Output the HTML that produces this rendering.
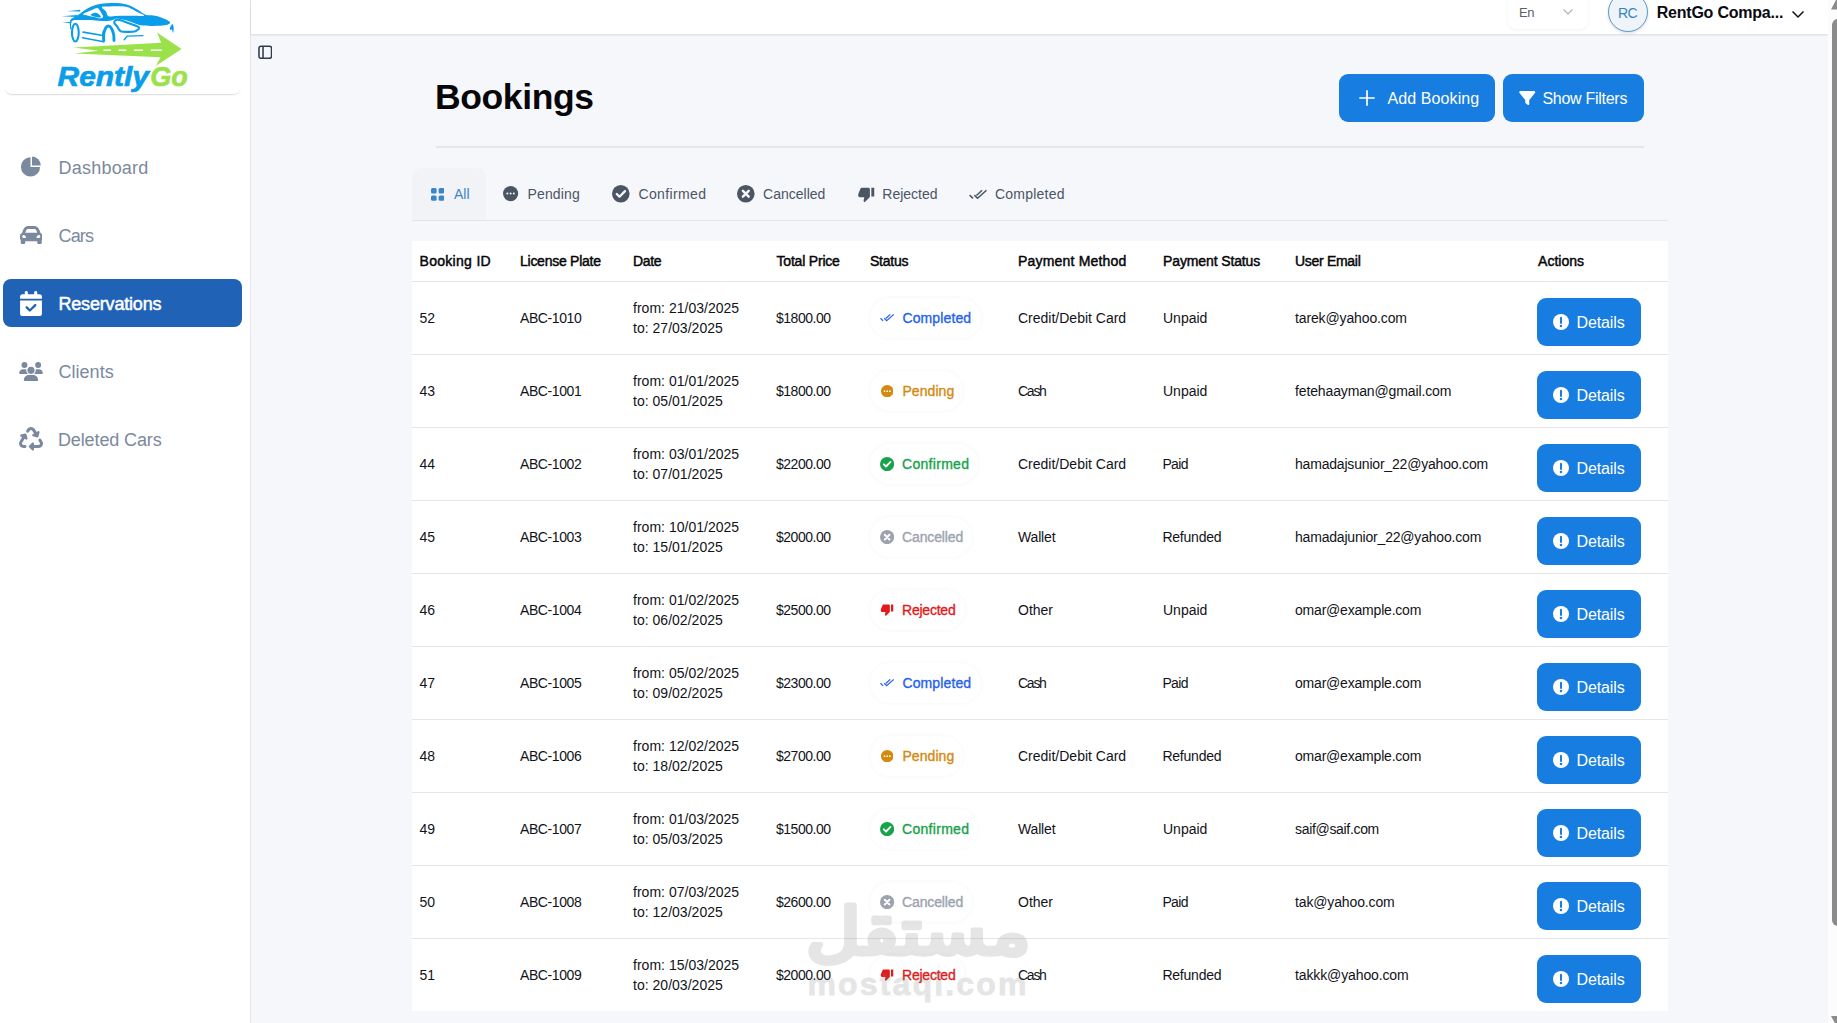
<!DOCTYPE html>
<html lang="en">
<head>
<meta charset="utf-8">
<title>Bookings - RentlyGo</title>
<style>
*{box-sizing:border-box;margin:0;padding:0}
html,body{width:1837px;height:1023px;overflow:hidden}
body{position:relative;background:#f5f7fb;font-family:"Liberation Sans",sans-serif;color:#0b0b0f;font-size:14px}
.abs{position:absolute}
/* sidebar */
.sidebar{position:absolute;left:0;top:0;width:251px;height:1023px;background:#fff;border-right:1px solid #e6e6e9}
.logo-box{position:absolute;left:4px;top:-6px;width:237px;height:100px;border-radius:8px;background:#fff;box-shadow:0 2px 1.5px -1px rgba(0,0,0,.15)}
.logo{position:absolute;left:50px;top:0;width:150px;height:96px}
.nav{position:absolute;left:3px;width:239px;height:48px;border-radius:8px;color:#7b899e;font-size:18px}
.nav svg{position:absolute;fill:#7b899e}
.nav .nt{position:absolute;left:56px;top:15px;line-height:20px;white-space:nowrap}
.nav.active{background:#2062b5;color:#fff;-webkit-text-stroke:0.5px #fff}
.nav.active svg{fill:#fff}
/* topbar */
.topbar{position:absolute;left:251px;top:0;width:1577px;height:34px;background:#fff;box-shadow:0 1px 2px rgba(0,0,0,.12)}
.lang{position:absolute;left:1508px;top:-10px;width:80px;height:39px;border-radius:8px;background:#fff;box-shadow:0 1px 3px rgba(0,0,0,.06)}
.avatar{position:absolute;left:1608px;top:-8px;width:40px;height:40px;border-radius:50%;background:#eef4fa;border:1px solid #5a9bcb;box-shadow:0 1px 3px rgba(0,0,0,.15)}
/* scrollbar */
.sb{position:absolute;left:1828px;top:0;width:9px;height:1023px;background:#fcfcfc}
.sb i{position:absolute;left:4px;top:19px;width:12px;height:907px;border-radius:6px;background:#8b8b8b}
/* header */
h1{position:absolute;left:435px;top:75px;font-size:35.5px;line-height:44px;font-weight:bold;color:#07070a;white-space:nowrap;letter-spacing:0}
.btn{position:absolute;height:48px;border-radius:9px;background:#177de0;color:#fff;font-size:16px;white-space:nowrap}
.btn .bt{position:absolute;top:15px;line-height:20px}
.btn svg{position:absolute}
.hr{position:absolute;left:436px;top:146px;width:1208px;height:2px;background:#e4e6e9}
/* tabs */
.tabline{position:absolute;left:412px;top:220px;width:1256px;height:1px;background:#e3e5ea}
.tab-all{position:absolute;left:412px;top:168px;width:74px;height:52px;border-radius:9px 9px 0 0;background:#f2f3f7}
.tab{position:absolute;top:184px;line-height:20px;font-size:14px;color:#4b5563;white-space:nowrap}
.ticon{position:absolute}
/* table */
.table{position:absolute;left:412px;top:241px;width:1256px;height:770px;background:#fff}
.row{position:absolute;left:0;width:1256px;height:73px;border-top:1px solid #e4e6ea}
.th{position:absolute;top:10px;line-height:20px;font-size:14px;white-space:nowrap;color:#050508;-webkit-text-stroke:0.45px #050508}
.c{position:absolute;top:26px;line-height:20px;white-space:nowrap;color:#111318}
.c.d{top:16px}
.badge{position:absolute;left:458px;top:16px;height:40px;border-radius:20px;background:#fff;box-shadow:0 0 4px rgba(0,0,0,.042);font-size:14px;white-space:nowrap;-webkit-text-stroke:0.35px}
.badge .bx{position:absolute;left:32px;top:10px;line-height:20px}
.badge svg{position:absolute}
.det{position:absolute;left:1125px;top:16px;width:104px;height:48px;border-radius:9px;background:#177de0;color:#fff;font-size:16px}
.det .dx{position:absolute;left:40px;top:15px;line-height:20px}
.det svg{position:absolute;left:16px;top:16px;width:16px;height:16px}
.wm{position:absolute;color:#808080;opacity:.2;white-space:nowrap}
</style>
</head>
<body>
<div class="sidebar">
<div class="logo-box"></div>
<svg class="logo" viewBox="0 0 1598 1023">
<path fill="#0a9de9" fill-rule="evenodd" d="M216 235C214 232 217 212 224 203C232 194 248 188 263 180C278 171 298 161 315 150C332 138 341 125 364 111C386 97 417 78 447 66C477 54 510 46 544 40C579 35 619 32 656 31C693 31 735 32 767 36C800 41 823 48 851 59C878 71 906 88 934 104C962 121 990 146 1018 157C1045 167 1072 160 1101 166C1130 171 1162 178 1192 189C1221 201 1265 221 1276 233C1288 245 1274 252 1261 259C1248 265 1230 270 1198 273C1167 276 1112 277 1073 276C1035 276 999 275 969 270C939 265 919 252 892 244C866 235 838 225 809 217C779 210 737 199 715 198C693 197 693 206 677 210C660 214 641 222 614 224C587 226 553 223 517 221C481 219 440 214 398 213C357 212 293 211 266 213C239 215 243 220 235 224C226 228 218 239 216 235ZM350 153C348 146 377 135 395 127C412 118 436 110 454 103C472 96 491 86 503 86C515 87 517 95 525 104C533 114 543 130 550 143C557 155 569 171 565 180C562 188 546 196 531 196C515 197 496 187 475 182C454 177 426 172 405 167C384 162 351 160 350 153ZM553 74C560 65 599 69 642 68C685 68 771 66 809 71C847 75 849 85 871 95C893 106 920 122 941 134C962 146 1015 161 1000 167C985 173 899 168 851 169C802 170 749 170 711 170C673 171 641 180 622 172C603 164 608 138 597 122C585 105 545 83 553 74Z"/>
<path fill="#0a9de9" d="M433 159C432 154 445 146 454 143C463 139 475 135 485 136C495 136 504 140 513 146C522 152 538 167 541 174C544 181 539 186 531 188C522 189 504 185 492 182C481 180 471 177 461 173C451 169 434 164 433 159Z"/>
<g fill="none" stroke="#0a9de9" stroke-linecap="round" stroke-linejoin="round">
<path d="M715 209C731 206 756 218 781 226C806 234 837 246 864 257C892 268 940 280 948 292C956 305 928 325 910 333C891 340 863 340 837 340C811 340 773 342 753 333C733 323 726 297 715 282C703 266 684 252 684 240C684 228 699 211 715 209Z" stroke-width="23"/>
<ellipse cx="270" cy="348" rx="36" ry="94" stroke-width="22"/>
<path d="M572 435C572 423 569 384 572 362C576 339 585 313 593 299C601 285 611 277 621 277C631 277 643 285 652 299C662 313 672 340 677 362C682 384 681 420 682 431" stroke-width="31"/>
<path d="M224 216C223 223 218 242 217 257C217 273 220 298 221 306" stroke-width="13"/>
<path d="M353 342 L565 379M346 402 L572 445 L565 341" stroke-width="17"/>
<path d="M791 424 L824 384 L990 380" stroke-width="14"/>
</g>
<path fill="#0a9de9" d="M183 120 L322 104 L322 122Z"/>
<path fill="#0a9de9" d="M123 174 L287 159 L287 180Z"/>
<path fill="#0a9de9" d="M134 240 L228 233 L228 249Z"/>
<path fill="#0a9de9" d="M1276 306C1277 296 1297 257 1304 256C1311 255 1317 283 1318 299C1319 315 1314 348 1311 351C1308 354 1305 324 1299 317C1294 309 1276 316 1276 306Z"/>
<path d="M250 505L1185 455L1140 345L1402 522L1130 700L1178 610L258 570L520 540Z" fill="#9be24a"/>
<path d="M570 535H650M730 535H812M895 535H990M1075 535H1190" stroke="#fff" stroke-width="17" fill="none"/>
<text x="80" y="915" font-family="Liberation Sans, sans-serif" font-weight="bold" font-style="italic" font-size="290" fill="#0a9de9" stroke="#0a9de9" stroke-width="7" textLength="975" lengthAdjust="spacingAndGlyphs">Rently</text>
<text x="1068" y="915" font-family="Liberation Sans, sans-serif" font-weight="bold" font-style="italic" font-size="290" fill="#9be24a" stroke="#9be24a" stroke-width="7" textLength="400" lengthAdjust="spacingAndGlyphs">Go</text>
</svg>
<div class="nav" style="top:143px"><svg style="left:17px;top:13px;width:22px;height:22px" viewBox="0 0 22 22"><path d="M10.500 10.900L10.500 1.300A9.600 9.600 0 1 0 20.100 10.900Z"/><path d="M12 9.400L12 0.600A8.800 8.800 0 0 1 20.800 9.400Z"/></svg><div class="nt"><span style="letter-spacing:0.21px;margin-left:-0.45px">Dashboard</span></div></div>
<div class="nav" style="top:211px"><svg style="left:16.8px;top:14.9px;width:22.5px;height:18.2px" viewBox="0 64 480 384" preserveAspectRatio="none"><path d="M438.660 212.330l-11.240-28.100-19.930-49.830C390.380 91.630 349.570 64 303.500 64h-127c-46.060 0-86.880 27.630-103.990 70.400l-19.930 49.830-11.240 28.100C17.220 221.500 0 244.660 0 272v48c0 16.120 6.160 30.670 16 41.930V416c0 17.670 14.330 32 32 32h32c17.670 0 32-14.330 32-32v-32h256v32c0 17.670 14.330 32 32 32h32c17.670 0 32-14.330 32-32v-54.070c9.840-11.250 16-25.800 16-41.930v-48c0-27.340-17.220-50.500-41.340-59.670zm-306.730-54.160c7.290-18.220 24.940-30.170 44.570-30.170h127c19.630 0 37.280 11.950 44.570 30.170L368 208H112l19.930-49.830zM80 319.800c-19.200 0-32-12.760-32-31.900S60.800 256 80 256s48 28.710 48 47.850-28.800 15.950-48 15.950zm320 0c-19.200 0-48 3.190-48-15.950S380.800 256 400 256s32 12.760 32 31.900-12.800 31.900-32 31.900z"/></svg><div class="nt"><span style="letter-spacing:-0.87px;margin-left:-0.45px">Cars</span></div></div>
<div class="nav active" style="top:279px"><svg style="left:17px;top:11.5px;width:22px;height:25px" viewBox="0 0 448 512"><path d="M128 0c17.700 0 32 14.300 32 32V64H288V32c0-17.700 14.300-32 32-32s32 14.300 32 32V64h48c26.500 0 48 21.500 48 48v48H0V112C0 85.500 21.500 64 48 64H96V32c0-17.700 14.300-32 32-32zM0 192H448V464c0 26.500-21.500 48-48 48H48c-26.500 0-48-21.500-48-48V192zM329 305c9.400-9.400 9.400-24.600 0-33.900s-24.600-9.400-33.900 0l-95 95-47-47c-9.400-9.400-24.600-9.400-33.900 0s-9.400 24.600 0 33.900l64 64c9.400 9.400 24.600 9.400 33.900 0L329 305z"/></svg><div class="nt"><span style="letter-spacing:-0.18px;margin-left:-0.54px">Reservations</span></div></div>
<div class="nav" style="top:347px"><svg style="left:16px;top:14.5px;width:24px;height:19px" viewBox="0 0 640 512"><path d="M144 0a80 80 0 1 1 0 160A80 80 0 1 1 144 0zM512 0a80 80 0 1 1 0 160A80 80 0 1 1 512 0zM0 298.700C0 239.800 47.800 192 106.700 192h42.700c15.900 0 31 3.500 44.600 9.700c-1.300 7.200-1.900 14.700-1.900 22.300c0 38.200 16.800 72.500 43.300 96c-.2 0-.4 0-.7 0H21.300C9.600 320 0 310.400 0 298.700zM405.300 320c-.2 0-.4 0-.7 0c26.600-23.500 43.300-57.800 43.300-96c0-7.600-.7-15-1.900-22.300c13.600-6.300 28.700-9.700 44.600-9.700h42.700C592.200 192 640 239.800 640 298.700c0 11.800-9.600 21.300-21.300 21.300H405.300zM224 224a96 96 0 1 1 192 0 96 96 0 1 1 -192 0zM128 485.300C128 411.700 187.700 352 261.300 352H378.700C452.300 352 512 411.700 512 485.300c0 14.700-11.900 26.700-26.700 26.700H154.700c-14.700 0-26.700-11.900-26.700-26.700z"/></svg><div class="nt"><span style="letter-spacing:0.03px;margin-left:-0.54px">Clients</span></div></div>
<div class="nav" style="top:415px"><svg style="left:16px;top:12px;width:24px;height:24px" viewBox="0 0 512 512"><path d="M174.700 45.100C192.200 17 223 0 256 0s63.800 17 81.300 45.100l38.600 61.700 27-15.600c8.400-4.900 18.900-4.200 26.600 1.700s11.100 15.900 8.600 25.300l-23.400 87.400c-3.400 12.800-16.600 20.400-29.400 17l-87.400-23.400c-9.400-2.500-16.300-10.400-17.600-20s3.400-19.100 11.800-23.900l28.400-16.400L283 79c-5.800-9.300-16-15-27-15s-21.200 5.700-27 15l-17.500 28c-9.200 14.800-28.600 19.500-43.600 10.500c-15.300-9.200-20.200-29.200-10.700-44.400l17.500-28zM429.500 251.900c15-9 34.400-4.300 43.600 10.500l24.400 39.100c9.400 15.100 14.400 32.400 14.600 50.200c.3 53.100-42.700 96.400-95.800 96.400L320 448v32c0 9.700-5.800 18.500-14.800 22.200s-19.300 1.700-26.200-5.200l-64-64c-9.400-9.400-9.400-24.600 0-33.900l64-64c6.900-6.900 17.200-8.900 26.200-5.200s14.800 12.500 14.800 22.200v32l96.200 0c17.600 0 31.900-14.400 31.800-32c0-5.900-1.700-11.700-4.800-16.700l-24.400-39.100c-9.500-15.200-4.700-35.200 10.700-44.400zm-364.600-31L36 204.200c-8.400-4.900-13.100-14.300-11.800-23.900s8.200-17.500 17.600-20l87.400-23.400c12.800-3.400 26 4.200 29.400 17L182 241.200c2.500 9.400-.9 19.300-8.600 25.300s-18.200 6.600-26.600 1.700l-26.500-15.300L68.800 335.300c-3.100 5-4.800 10.800-4.800 16.700c-.1 17.600 14.200 32 31.800 32l32.200 0c17.700 0 32 14.300 32 32s-14.300 32-32 32l-32.200 0C42.700 448-.3 404.800 0 351.600c.1-17.800 5.100-35.100 14.600-50.200l50.300-80.500z"/></svg><div class="nt"><span style="letter-spacing:-0.11px;margin-left:-1.08px">Deleted Cars</span></div></div>
</div>
<div class="topbar"></div>
<div class="lang"></div>
<div class="abs" style="left:1519px;top:2.500px;line-height:20px;font-size:13px;color:#596171"><span style="letter-spacing:-0.54px">En</span></div>
<svg class="abs" style="left:1562px;top:8px;width:12px;height:8px" viewBox="0 0 12 8" fill="none" stroke="#aab0b8" stroke-width="1.200"><path d="M1.500 1.500L6 6L10.500 1.500"/></svg>
<div class="avatar"></div>
<div class="abs" style="left:1618px;top:2.500px;line-height:20px;font-size:14px;color:#3286c3"><span style="letter-spacing:-0.54px">RC</span></div>
<div class="abs" style="left:1656px;top:3px;line-height:20px;font-size:16px;font-weight:bold;color:#0a0a12;white-space:nowrap"><span style="letter-spacing:-0.22px;margin-left:0.72px">RentGo Compa...</span></div>
<svg class="abs" style="left:1791px;top:10px;width:14px;height:9px" viewBox="0 0 14 9" fill="none" stroke="#111" stroke-width="1.500"><path d="M1.500 1.500L7 7L12.500 1.500"/></svg>
<div class="sb"><i></i>
<svg class="abs" style="left:3px;top:0;width:12px;height:10px" viewBox="0 0 12 10"><path d="M6 -2L12 9.500H0Z" fill="#8b8b8b"/></svg>
<svg class="abs" style="left:3px;top:1015px;width:12px;height:8px" viewBox="0 0 12 8"><path d="M0 1H12L6 12Z" fill="#8b8b8b"/></svg>
</div>
<svg class="abs" style="left:257.500px;top:44.500px;width:14.500px;height:14.500px" viewBox="0 0 15 15" fill="none" stroke="#333c4c" stroke-width="1.600"><rect x="1" y="1.200" width="13" height="12.600" rx="2.200"/><path d="M5.200 1.200V13.800"/></svg>
<h1><span style="letter-spacing:-0.39px">Bookings</span></h1>
<div class="btn" style="left:1339px;top:74px;width:156px">
<svg style="left:20px;top:16px;width:16px;height:16px" viewBox="0 0 16 16" stroke="#fff" stroke-width="1.700" fill="none"><path d="M8 0.300V15.700M0.300 8H15.700"/></svg>
<div class="bt" style="left:48px"><span style="letter-spacing:0.10px;margin-left:0.54px">Add Booking</span></div></div>
<div class="btn" style="left:1503px;top:74px;width:141px">
<svg style="left:16px;top:16px;width:16.5px;height:16px" viewBox="0 0 512 512" fill="#fff"><path d="M3.900 54.900C10.500 40.900 24.500 32 40 32H472c15.500 0 29.500 8.900 36.100 22.900s4.600 30.500-5.200 42.500L320 320.900V448c0 12.100-6.800 23.200-17.700 28.600s-23.800 4.300-33.500-3l-64-48c-8.100-6-12.800-15.500-12.800-25.600V320.900L9 97.300C-.7 85.400-2.800 68.800 3.900 54.900z"/></svg>
<div class="bt" style="left:40px"><span style="letter-spacing:-0.28px;margin-left:-0.54px">Show Filters</span></div></div>
<div class="hr"></div>
<div class="tab-all"></div><div class="tabline"></div>
<svg class="ticon" style="left:430.500px;top:187.800px;width:13.500px;height:13px" viewBox="0 0 13.500 13" fill="#3b86c6"><rect x="0" y="0" width="5.600" height="5.400" rx="1.500"/><rect x="7.600" y="0" width="5.600" height="5.400" rx="1.500"/><rect x="0" y="7.400" width="5.600" height="5.400" rx="1.500"/><rect x="7.600" y="7.400" width="5.600" height="5.400" rx="1.500"/></svg>
<div class="tab" style="left:454px;color:#3b86c6"><span>All</span></div>
<svg class="ticon" style="position:absolute;left:503.4px;top:186.4px;width:15.2px;height:15.2px" viewBox="-10 -10 20 20"><circle r="10" fill="#4b5563"/><circle cx="-4.3" cy="0" r="1.35" fill="#f5f7fb"/><circle cx="0" cy="0" r="1.35" fill="#f5f7fb"/><circle cx="4.3" cy="0" r="1.35" fill="#f5f7fb"/></svg>
<div class="tab" style="left:528px"><span style="letter-spacing:0.15px;margin-left:-0.54px">Pending</span></div>
<svg class="ticon" style="position:absolute;left:612.2px;top:185.2px;width:17.6px;height:17.6px" viewBox="-10 -10 20 20"><circle r="10" fill="#4b5563"/><path d="M-4.600 0.300L-1.500 3.400L4.800 -3" fill="none" stroke="#f5f7fb" stroke-width="2.600" stroke-linecap="round" stroke-linejoin="round"/></svg>
<div class="tab" style="left:638.500px"><span style="letter-spacing:0.36px">Confirmed</span></div>
<svg class="ticon" style="position:absolute;left:737.2px;top:185.2px;width:17.6px;height:17.6px" viewBox="-10 -10 20 20"><circle r="10" fill="#4b5563"/><path d="M-3.300 -3.300L3.300 3.300M3.300 -3.300L-3.300 3.300" fill="none" stroke="#f5f7fb" stroke-width="2.800" stroke-linecap="round"/></svg>
<div class="tab" style="left:763.500px"><span style="margin-left:-0.45px">Cancelled</span></div>
<svg style="position:absolute;left:856.5px;top:186.5px;width:18.5px;height:16px" viewBox="0 2 24 22" fill="#4b5563"><path d="M15 3H6c-.83 0-1.54.5-1.84 1.22l-3.020 7.050c-.09.23-.14.47-.14.73v2c0 1.100.9 2 2 2h6.310l-.95 4.570-.03.32c0 .41.17.79.44 1.060L9.830 23l6.590-6.590c.36-.36.58-.86.58-1.410V5c0-1.100-.9-2-2-2zm4 0v12h4V3h-4z"/></svg>
<div class="tab" style="left:883px"><span style="margin-left:-0.72px">Rejected</span></div>
<svg class="ticon" style="position:absolute;left:968.5px;top:188.5px;width:18.5px;height:11px" viewBox="0 0 18 10" fill="none" stroke="#4b5563" stroke-width="1.45" stroke-linecap="butt" stroke-linejoin="miter"><path d="M5.200 5.600L8.300 8.700L17 0.800"/><path d="M0.600 5.600L3.900 8.800M7.200 5.900L12.700 0.800"/></svg>
<div class="tab" style="left:995px"><span style="letter-spacing:0.23px">Completed</span></div>
<div class="table">
<div class="th" style="left:7.5px"><span style="letter-spacing:0.30px">Booking ID</span></div>
<div class="th" style="left:108px"><span style="letter-spacing:-0.26px">License Plate</span></div>
<div class="th" style="left:221px"><span style="letter-spacing:-0.36px">Date</span></div>
<div class="th" style="left:364px"><span style="letter-spacing:-0.20px;margin-left:0.54px">Total Price</span></div>
<div class="th" style="left:458px"><span style="letter-spacing:-0.22px">Status</span></div>
<div class="th" style="left:606px"><span style="letter-spacing:0.19px">Payment Method</span></div>
<div class="th" style="left:751px"><span style="letter-spacing:-0.12px">Payment Status</span></div>
<div class="th" style="left:883px"><span style="letter-spacing:-0.30px">User Email</span></div>
<div class="th" style="left:1125px"><span style="margin-left:1.08px">Actions</span></div>
<div class="row" style="top:40px">
<div class="c" style="left:7.5px"><span>52</span></div><div class="c" style="left:108px"><span style="letter-spacing:-0.41px">ABC-1010</span></div>
<div class="c d" style="left:221px"><span style="letter-spacing:0.02px">from: 21/03/2025</span><br><span style="letter-spacing:0.02px">to: 27/03/2025</span></div>
<div class="c" style="left:364px"><span style="letter-spacing:-0.49px">$1800.00</span></div>
<div class="badge" style="width:111px;color:#2563eb"><svg class="" style="position:absolute;left:9.5px;top:15px;width:14.5px;height:9.5px" viewBox="0 0 18 10" fill="none" stroke="#2563eb" stroke-width="1.5" stroke-linecap="butt" stroke-linejoin="miter"><path d="M5.200 5.600L8.300 8.700L17 0.800"/><path d="M0.600 5.600L3.900 8.800M7.200 5.900L12.700 0.800"/></svg><div class="bx"><span style="letter-spacing:0.12px;margin-left:0.45px">Completed</span></div></div>
<div class="c" style="left:606px"><span>Credit/Debit Card</span></div><div class="c" style="left:751px"><span>Unpaid</span></div><div class="c" style="left:883px"><span style="letter-spacing:-0.13px">tarek@yahoo.com</span></div>
<div class="det"><svg class="" style="position:absolute;left:16px;top:16px;width:16px;height:16px" viewBox="-10 -10 20 20"><circle r="10" fill="#fff"/><path d="M0 -5.200V1.200" fill="none" stroke="#177de0" stroke-width="2.500" stroke-linecap="round"/><circle cx="0" cy="4.900" r="1.600" fill="#177de0"/></svg><div class="dx"><span style="letter-spacing:-0.14px;margin-left:-0.45px">Details</span></div></div>
</div>
<div class="row" style="top:113px">
<div class="c" style="left:7.5px"><span>43</span></div><div class="c" style="left:108px"><span style="letter-spacing:-0.41px">ABC-1001</span></div>
<div class="c d" style="left:221px"><span style="letter-spacing:0.02px">from: 01/01/2025</span><br><span style="letter-spacing:0.02px">to: 05/01/2025</span></div>
<div class="c" style="left:364px"><span style="letter-spacing:-0.49px">$1800.00</span></div>
<div class="badge" style="width:93px;color:#d4890f"><svg class="" style="position:absolute;left:10.8px;top:13.8px;width:12.4px;height:12.4px" viewBox="-10 -10 20 20"><circle r="10" fill="#d4890f"/><circle cx="-4.3" cy="0" r="1.35" fill="#fff"/><circle cx="0" cy="0" r="1.35" fill="#fff"/><circle cx="4.3" cy="0" r="1.35" fill="#fff"/></svg><div class="bx"><span style="letter-spacing:0.07px;margin-left:0.45px">Pending</span></div></div>
<div class="c" style="left:606px"><span style="letter-spacing:-1.26px">Cash</span></div><div class="c" style="left:751px"><span>Unpaid</span></div><div class="c" style="left:883px"><span style="letter-spacing:-0.13px">fetehaayman@gmail.com</span></div>
<div class="det"><svg class="" style="position:absolute;left:16px;top:16px;width:16px;height:16px" viewBox="-10 -10 20 20"><circle r="10" fill="#fff"/><path d="M0 -5.200V1.200" fill="none" stroke="#177de0" stroke-width="2.500" stroke-linecap="round"/><circle cx="0" cy="4.900" r="1.600" fill="#177de0"/></svg><div class="dx"><span style="letter-spacing:-0.14px;margin-left:-0.45px">Details</span></div></div>
</div>
<div class="row" style="top:186px">
<div class="c" style="left:7.5px"><span>44</span></div><div class="c" style="left:108px"><span style="letter-spacing:-0.41px">ABC-1002</span></div>
<div class="c d" style="left:221px"><span style="letter-spacing:0.02px">from: 03/01/2025</span><br><span style="letter-spacing:0.02px">to: 07/01/2025</span></div>
<div class="c" style="left:364px"><span style="letter-spacing:-0.49px">$2200.00</span></div>
<div class="badge" style="width:108px;color:#16a34a"><svg class="" style="position:absolute;left:9.9px;top:12.9px;width:14.2px;height:14.2px" viewBox="-10 -10 20 20"><circle r="10" fill="#16a34a"/><path d="M-4.600 0.300L-1.500 3.400L4.800 -3" fill="none" stroke="#fff" stroke-width="2.600" stroke-linecap="round" stroke-linejoin="round"/></svg><div class="bx"><span style="letter-spacing:0.30px">Confirmed</span></div></div>
<div class="c" style="left:606px"><span>Credit/Debit Card</span></div><div class="c" style="left:751px"><span style="letter-spacing:-0.66px;margin-left:-0.63px">Paid</span></div><div class="c" style="left:883px"><span style="letter-spacing:-0.19px">hamadajsunior_22@yahoo.com</span></div>
<div class="det"><svg class="" style="position:absolute;left:16px;top:16px;width:16px;height:16px" viewBox="-10 -10 20 20"><circle r="10" fill="#fff"/><path d="M0 -5.200V1.200" fill="none" stroke="#177de0" stroke-width="2.500" stroke-linecap="round"/><circle cx="0" cy="4.900" r="1.600" fill="#177de0"/></svg><div class="dx"><span style="letter-spacing:-0.14px;margin-left:-0.45px">Details</span></div></div>
</div>
<div class="row" style="top:259px">
<div class="c" style="left:7.5px"><span>45</span></div><div class="c" style="left:108px"><span style="letter-spacing:-0.41px">ABC-1003</span></div>
<div class="c d" style="left:221px"><span style="letter-spacing:0.02px">from: 10/01/2025</span><br><span style="letter-spacing:0.02px">to: 15/01/2025</span></div>
<div class="c" style="left:364px"><span style="letter-spacing:-0.49px">$2000.00</span></div>
<div class="badge" style="width:102px;color:#9ca3af"><svg class="" style="position:absolute;left:9.9px;top:12.9px;width:14.2px;height:14.2px" viewBox="-10 -10 20 20"><circle r="10" fill="#9ca3af"/><path d="M-3.300 -3.300L3.300 3.300M3.300 -3.300L-3.300 3.300" fill="none" stroke="#fff" stroke-width="2.800" stroke-linecap="round"/></svg><div class="bx"><span style="letter-spacing:-0.12px">Cancelled</span></div></div>
<div class="c" style="left:606px"><span style="letter-spacing:-0.16px">Wallet</span></div><div class="c" style="left:751px"><span style="letter-spacing:-0.22px;margin-left:-0.63px">Refunded</span></div><div class="c" style="left:883px"><span style="letter-spacing:-0.19px">hamadajunior_22@yahoo.com</span></div>
<div class="det"><svg class="" style="position:absolute;left:16px;top:16px;width:16px;height:16px" viewBox="-10 -10 20 20"><circle r="10" fill="#fff"/><path d="M0 -5.200V1.200" fill="none" stroke="#177de0" stroke-width="2.500" stroke-linecap="round"/><circle cx="0" cy="4.900" r="1.600" fill="#177de0"/></svg><div class="dx"><span style="letter-spacing:-0.14px;margin-left:-0.45px">Details</span></div></div>
</div>
<div class="row" style="top:332px">
<div class="c" style="left:7.5px"><span>46</span></div><div class="c" style="left:108px"><span style="letter-spacing:-0.41px">ABC-1004</span></div>
<div class="c d" style="left:221px"><span style="letter-spacing:0.02px">from: 01/02/2025</span><br><span style="letter-spacing:0.02px">to: 06/02/2025</span></div>
<div class="c" style="left:364px"><span style="letter-spacing:-0.49px">$2500.00</span></div>
<div class="badge" style="width:94.5px;color:#e01b1b"><svg style="position:absolute;left:10.2px;top:14px;width:14px;height:12.5px" viewBox="0 2 24 22" fill="#e01b1b"><path d="M15 3H6c-.83 0-1.54.5-1.84 1.22l-3.020 7.050c-.09.23-.14.47-.14.73v2c0 1.100.9 2 2 2h6.310l-.95 4.570-.03.32c0 .41.17.79.44 1.060L9.830 23l6.590-6.590c.36-.36.58-.86.58-1.410V5c0-1.100-.9-2-2-2zm4 0v12h4V3h-4z"/></svg><div class="bx"><span style="letter-spacing:-0.22px">Rejected</span></div></div>
<div class="c" style="left:606px"><span>Other</span></div><div class="c" style="left:751px"><span>Unpaid</span></div><div class="c" style="left:883px"><span style="letter-spacing:-0.20px">omar@example.com</span></div>
<div class="det"><svg class="" style="position:absolute;left:16px;top:16px;width:16px;height:16px" viewBox="-10 -10 20 20"><circle r="10" fill="#fff"/><path d="M0 -5.200V1.200" fill="none" stroke="#177de0" stroke-width="2.500" stroke-linecap="round"/><circle cx="0" cy="4.900" r="1.600" fill="#177de0"/></svg><div class="dx"><span style="letter-spacing:-0.14px;margin-left:-0.45px">Details</span></div></div>
</div>
<div class="row" style="top:405px">
<div class="c" style="left:7.5px"><span>47</span></div><div class="c" style="left:108px"><span style="letter-spacing:-0.41px">ABC-1005</span></div>
<div class="c d" style="left:221px"><span style="letter-spacing:0.02px">from: 05/02/2025</span><br><span style="letter-spacing:0.02px">to: 09/02/2025</span></div>
<div class="c" style="left:364px"><span style="letter-spacing:-0.49px">$2300.00</span></div>
<div class="badge" style="width:111px;color:#2563eb"><svg class="" style="position:absolute;left:9.5px;top:15px;width:14.5px;height:9.5px" viewBox="0 0 18 10" fill="none" stroke="#2563eb" stroke-width="1.5" stroke-linecap="butt" stroke-linejoin="miter"><path d="M5.200 5.600L8.300 8.700L17 0.800"/><path d="M0.600 5.600L3.900 8.800M7.200 5.900L12.700 0.800"/></svg><div class="bx"><span style="letter-spacing:0.12px;margin-left:0.45px">Completed</span></div></div>
<div class="c" style="left:606px"><span style="letter-spacing:-1.26px">Cash</span></div><div class="c" style="left:751px"><span style="letter-spacing:-0.66px;margin-left:-0.63px">Paid</span></div><div class="c" style="left:883px"><span style="letter-spacing:-0.20px">omar@example.com</span></div>
<div class="det"><svg class="" style="position:absolute;left:16px;top:16px;width:16px;height:16px" viewBox="-10 -10 20 20"><circle r="10" fill="#fff"/><path d="M0 -5.200V1.200" fill="none" stroke="#177de0" stroke-width="2.500" stroke-linecap="round"/><circle cx="0" cy="4.900" r="1.600" fill="#177de0"/></svg><div class="dx"><span style="letter-spacing:-0.14px;margin-left:-0.45px">Details</span></div></div>
</div>
<div class="row" style="top:478px">
<div class="c" style="left:7.5px"><span>48</span></div><div class="c" style="left:108px"><span style="letter-spacing:-0.41px">ABC-1006</span></div>
<div class="c d" style="left:221px"><span style="letter-spacing:0.02px">from: 12/02/2025</span><br><span style="letter-spacing:0.02px">to: 18/02/2025</span></div>
<div class="c" style="left:364px"><span style="letter-spacing:-0.49px">$2700.00</span></div>
<div class="badge" style="width:93px;color:#d4890f"><svg class="" style="position:absolute;left:10.8px;top:13.8px;width:12.4px;height:12.4px" viewBox="-10 -10 20 20"><circle r="10" fill="#d4890f"/><circle cx="-4.3" cy="0" r="1.35" fill="#fff"/><circle cx="0" cy="0" r="1.35" fill="#fff"/><circle cx="4.3" cy="0" r="1.35" fill="#fff"/></svg><div class="bx"><span style="letter-spacing:0.07px;margin-left:0.45px">Pending</span></div></div>
<div class="c" style="left:606px"><span>Credit/Debit Card</span></div><div class="c" style="left:751px"><span style="letter-spacing:-0.22px;margin-left:-0.63px">Refunded</span></div><div class="c" style="left:883px"><span style="letter-spacing:-0.20px">omar@example.com</span></div>
<div class="det"><svg class="" style="position:absolute;left:16px;top:16px;width:16px;height:16px" viewBox="-10 -10 20 20"><circle r="10" fill="#fff"/><path d="M0 -5.200V1.200" fill="none" stroke="#177de0" stroke-width="2.500" stroke-linecap="round"/><circle cx="0" cy="4.900" r="1.600" fill="#177de0"/></svg><div class="dx"><span style="letter-spacing:-0.14px;margin-left:-0.45px">Details</span></div></div>
</div>
<div class="row" style="top:551px">
<div class="c" style="left:7.5px"><span>49</span></div><div class="c" style="left:108px"><span style="letter-spacing:-0.41px">ABC-1007</span></div>
<div class="c d" style="left:221px"><span style="letter-spacing:0.02px">from: 01/03/2025</span><br><span style="letter-spacing:0.02px">to: 05/03/2025</span></div>
<div class="c" style="left:364px"><span style="letter-spacing:-0.49px">$1500.00</span></div>
<div class="badge" style="width:108px;color:#16a34a"><svg class="" style="position:absolute;left:9.9px;top:12.9px;width:14.2px;height:14.2px" viewBox="-10 -10 20 20"><circle r="10" fill="#16a34a"/><path d="M-4.600 0.300L-1.500 3.400L4.800 -3" fill="none" stroke="#fff" stroke-width="2.600" stroke-linecap="round" stroke-linejoin="round"/></svg><div class="bx"><span style="letter-spacing:0.30px">Confirmed</span></div></div>
<div class="c" style="left:606px"><span style="letter-spacing:-0.16px">Wallet</span></div><div class="c" style="left:751px"><span>Unpaid</span></div><div class="c" style="left:883px"><span style="letter-spacing:-0.32px">saif@saif.com</span></div>
<div class="det"><svg class="" style="position:absolute;left:16px;top:16px;width:16px;height:16px" viewBox="-10 -10 20 20"><circle r="10" fill="#fff"/><path d="M0 -5.200V1.200" fill="none" stroke="#177de0" stroke-width="2.500" stroke-linecap="round"/><circle cx="0" cy="4.900" r="1.600" fill="#177de0"/></svg><div class="dx"><span style="letter-spacing:-0.14px;margin-left:-0.45px">Details</span></div></div>
</div>
<div class="row" style="top:624px">
<div class="c" style="left:7.5px"><span>50</span></div><div class="c" style="left:108px"><span style="letter-spacing:-0.41px">ABC-1008</span></div>
<div class="c d" style="left:221px"><span style="letter-spacing:0.02px">from: 07/03/2025</span><br><span style="letter-spacing:0.02px">to: 12/03/2025</span></div>
<div class="c" style="left:364px"><span style="letter-spacing:-0.49px">$2600.00</span></div>
<div class="badge" style="width:102px;color:#9ca3af"><svg class="" style="position:absolute;left:9.9px;top:12.9px;width:14.2px;height:14.2px" viewBox="-10 -10 20 20"><circle r="10" fill="#9ca3af"/><path d="M-3.300 -3.300L3.300 3.300M3.300 -3.300L-3.300 3.300" fill="none" stroke="#fff" stroke-width="2.800" stroke-linecap="round"/></svg><div class="bx"><span style="letter-spacing:-0.12px">Cancelled</span></div></div>
<div class="c" style="left:606px"><span>Other</span></div><div class="c" style="left:751px"><span style="letter-spacing:-0.66px;margin-left:-0.63px">Paid</span></div><div class="c" style="left:883px"><span style="letter-spacing:-0.14px">tak@yahoo.com</span></div>
<div class="det"><svg class="" style="position:absolute;left:16px;top:16px;width:16px;height:16px" viewBox="-10 -10 20 20"><circle r="10" fill="#fff"/><path d="M0 -5.200V1.200" fill="none" stroke="#177de0" stroke-width="2.500" stroke-linecap="round"/><circle cx="0" cy="4.900" r="1.600" fill="#177de0"/></svg><div class="dx"><span style="letter-spacing:-0.14px;margin-left:-0.45px">Details</span></div></div>
</div>
<div class="row" style="top:697px">
<div class="c" style="left:7.5px"><span>51</span></div><div class="c" style="left:108px"><span style="letter-spacing:-0.41px">ABC-1009</span></div>
<div class="c d" style="left:221px"><span style="letter-spacing:0.02px">from: 15/03/2025</span><br><span style="letter-spacing:0.02px">to: 20/03/2025</span></div>
<div class="c" style="left:364px"><span style="letter-spacing:-0.49px">$2000.00</span></div>
<div class="badge" style="width:94.5px;color:#e01b1b"><svg style="position:absolute;left:10.2px;top:14px;width:14px;height:12.5px" viewBox="0 2 24 22" fill="#e01b1b"><path d="M15 3H6c-.83 0-1.54.5-1.84 1.22l-3.020 7.050c-.09.23-.14.47-.14.73v2c0 1.100.9 2 2 2h6.310l-.95 4.570-.03.32c0 .41.17.79.44 1.060L9.830 23l6.590-6.590c.36-.36.58-.86.58-1.410V5c0-1.100-.9-2-2-2zm4 0v12h4V3h-4z"/></svg><div class="bx"><span style="letter-spacing:-0.22px">Rejected</span></div></div>
<div class="c" style="left:606px"><span style="letter-spacing:-1.26px">Cash</span></div><div class="c" style="left:751px"><span style="letter-spacing:-0.22px;margin-left:-0.63px">Refunded</span></div><div class="c" style="left:883px"><span style="letter-spacing:-0.12px">takkk@yahoo.com</span></div>
<div class="det"><svg class="" style="position:absolute;left:16px;top:16px;width:16px;height:16px" viewBox="-10 -10 20 20"><circle r="10" fill="#fff"/><path d="M0 -5.200V1.200" fill="none" stroke="#177de0" stroke-width="2.500" stroke-linecap="round"/><circle cx="0" cy="4.900" r="1.600" fill="#177de0"/></svg><div class="dx"><span style="letter-spacing:-0.14px;margin-left:-0.45px">Details</span></div></div>
</div>
</div>
<svg class="wm" style="left:780px;top:880px;width:280px;height:110px" viewBox="0 0 280 110"><text transform="translate(138.250 73.500) scale(1.043 0.890)" x="0" y="0" text-anchor="middle" direction="rtl" font-family="DejaVu Sans, sans-serif" font-size="72" fill="#808080" stroke="#808080" stroke-width="5.500" stroke-linejoin="round">مستقل</text></svg>
<div class="wm" style="left:807.500px;top:964px;font-weight:bold;font-size:32px;line-height:40px;letter-spacing:2.150px;-webkit-text-stroke:0.800px #808080">mostaql.com</div>
</body>
</html>
